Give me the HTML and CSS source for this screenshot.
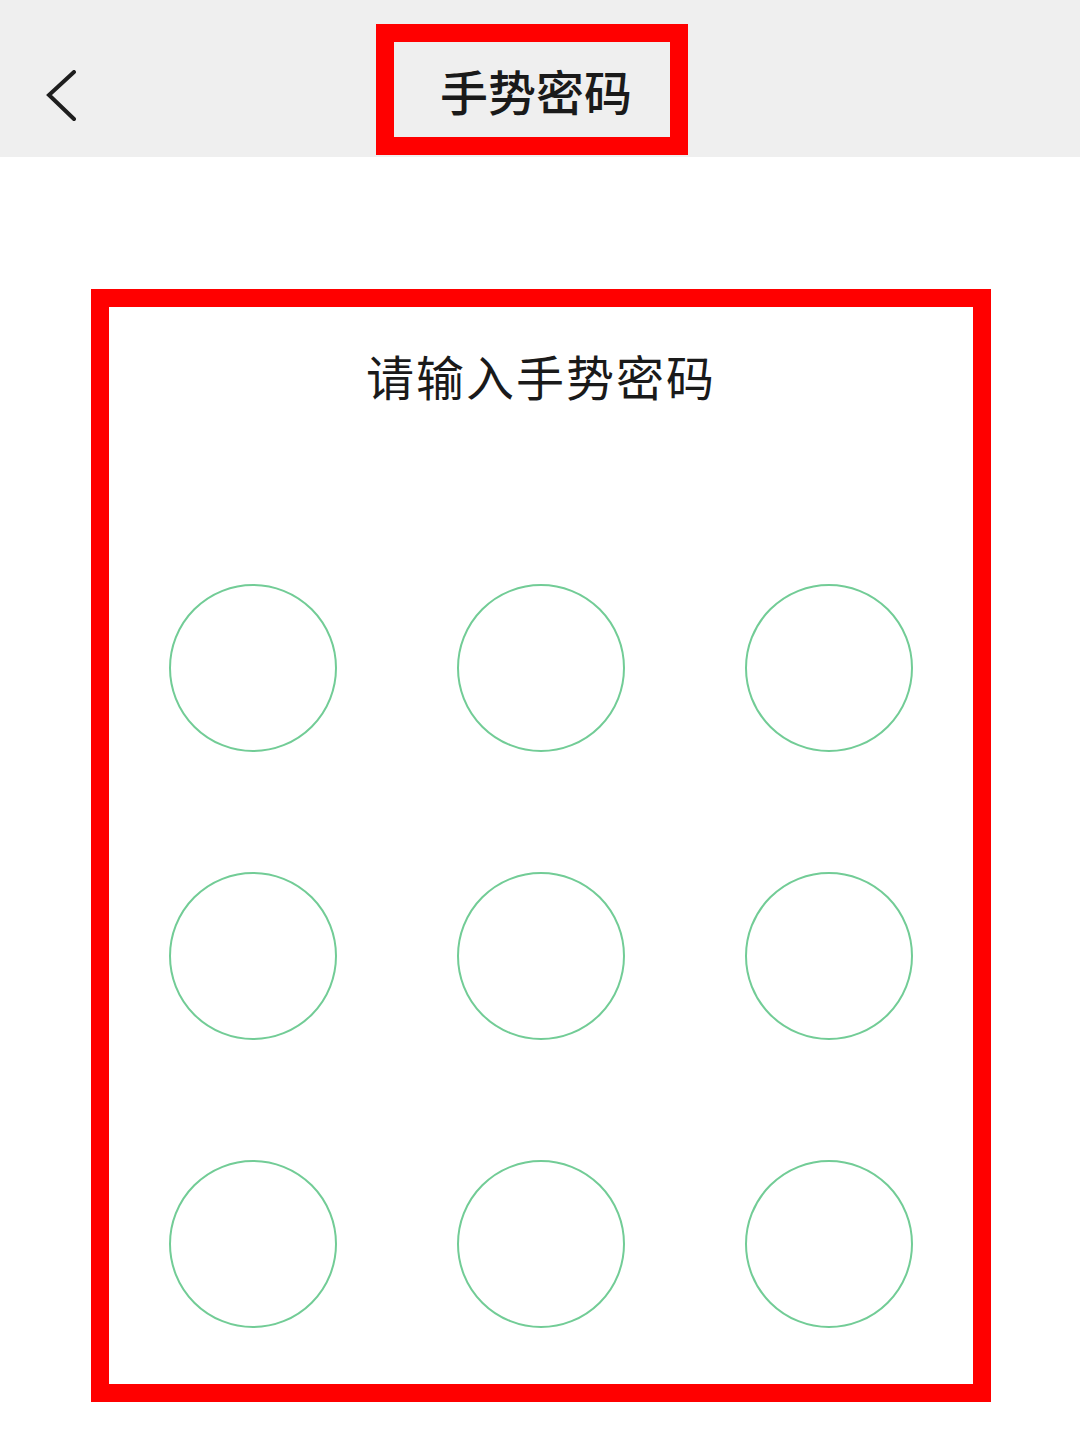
FILE: index.html
```html
<!DOCTYPE html>
<html lang="zh-CN">
<head>
    <meta charset="UTF-8">
    <meta name="viewport" content="width=device-width, initial-scale=1.0">
    <title>手势密码</title>
    <link rel="stylesheet" href="styles.css">
</head>
<body>
    <!-- Top bar -->
    <div class="topbar">
        <svg class="back" width="34" height="52" viewBox="0 0 34 52">
            <path d="M30 2 L5 25 L30 49" fill="none" stroke="#1e1e1e" stroke-width="4" stroke-linecap="round" stroke-linejoin="miter"/>
        </svg>
        <div class="title-box">
            <span class="title">手势密码</span>
        </div>
    </div>

    <!-- Gesture pad -->
    <div class="pad-box">
        <div class="hint">请输入手势密码</div>
        <div class="dots">
            <div class="dot"></div>
            <div class="dot"></div>
            <div class="dot"></div>
            <div class="dot"></div>
            <div class="dot"></div>
            <div class="dot"></div>
            <div class="dot"></div>
            <div class="dot"></div>
            <div class="dot"></div>
        </div>
    </div>
</body>
</html>
```

FILE: styles.css
```css
/* Page */
body, html {
    margin: 0;
    padding: 0;
    background: #ffffff;
    font-family: "Noto Sans CJK SC", "Noto Sans", sans-serif;
    color: #1a1a1a;
}

/* Top bar */
.topbar {
    display: flex;
    align-items: flex-start;
    height: 157px;
    background-color: #efefef;
}
.back {
    margin-top: 70px;
    margin-left: 44px;
}
.title-box {
    margin-top: 24px;
    margin-left: 298px;
    width: 276px;
    height: 95px;
    border: 18px solid #ff0000;
    display: flex;
    align-items: center;
}
.title {
    padding-left: 46px;
    font-size: 48px;
    font-weight: 500;
    line-height: 1;
    color: #1a1a1a;
}

/* Gesture pad */
.pad-box {
    margin: 132px 0 0 91px;
    width: 864px;
    height: 1077px;
    border: 18px solid #ff0000;
}
.hint {
    padding-top: 43px;
    text-align: center;
    font-size: 48px;
    line-height: 50px;
    letter-spacing: 2px;
}
.dots {
    display: grid;
    grid-template-columns: repeat(3, 168px);
    gap: 120px;
    justify-content: center;
    margin-top: 184px;
}
.dot {
    width: 168px;
    height: 168px;
    box-sizing: border-box;
    border: 2px solid #72cc96;
    border-radius: 50%;
}
```
